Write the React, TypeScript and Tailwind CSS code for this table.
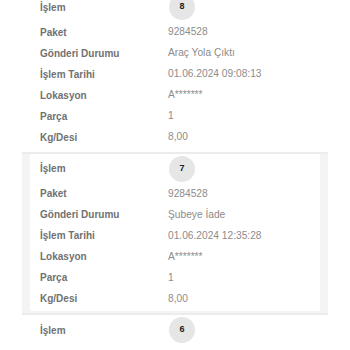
import React from 'react';

type Step = {
    no: number;
    status: string;
    date: string;
};

const steps: Step[] = [
    { no: 8, status: 'Araç Yola Çıktı', date: '01.06.2024 09:08:13' },
    { no: 7, status: 'Şubeye İade', date: '01.06.2024 12:35:28' },
    { no: 6, status: 'Transfer Merkezinde', date: '01.06.2024 08:12:40' },
];

const Row: React.FC<{ label: string; value: string }> = ({ label, value }) => (
    <div className="flex h-[21px] items-center">
        <span className="w-[128px] shrink-0 text-[10px] font-bold text-[#717171]">{label}</span>
        <span className="text-[10.2px] text-[#8c8c8c]">{value}</span>
    </div>
);

const StepCard: React.FC<{ step: Step; framed: boolean }> = ({ step, framed }) => {
    const body = (
        <div className={framed ? 'bg-white pl-[10px] pt-[2px] pb-[2px]' : 'pl-[18px] pt-[2px] pb-[4px]'}>
            <div className="flex h-[26px] items-center">
                <span className="w-[129px] shrink-0 text-[10px] font-bold text-[#717171]">İşlem</span>
                <span className="flex h-[26px] w-[26px] items-center justify-center rounded-full bg-[#e6e6e6] text-[9px] font-bold text-[#222]">
                    {step.no}
                </span>
            </div>
            <div className="mt-[1.5px]">
                <Row label="Paket" value="9284528" />
                <Row label="Gönderi Durumu" value={step.status} />
                <Row label="İşlem Tarihi" value={step.date} />
                <Row label="Lokasyon" value="A*******" />
                <Row label="Parça" value="1" />
                <Row label="Kg/Desi" value="8,00" />
            </div>
        </div>
    );

    return (
        <div className="border-t-2 border-[#ececec]">
            {framed ? <div className="bg-[#f4f4f4] px-[8px] pb-[2px]">{body}</div> : body}
        </div>
    );
};

export default function App() {
    return (
        <div className="h-[350px] w-[350px] overflow-hidden bg-white" style={{ fontFamily: '"Liberation Sans", Arial, sans-serif' }}>
            <div className="ml-[22px] mt-[-10px] w-[306px]">
                {steps.map((s, i) => (
                    <StepCard key={s.no} step={s} framed={i % 2 === 1} />
                ))}
            </div>
        </div>
    );
}
